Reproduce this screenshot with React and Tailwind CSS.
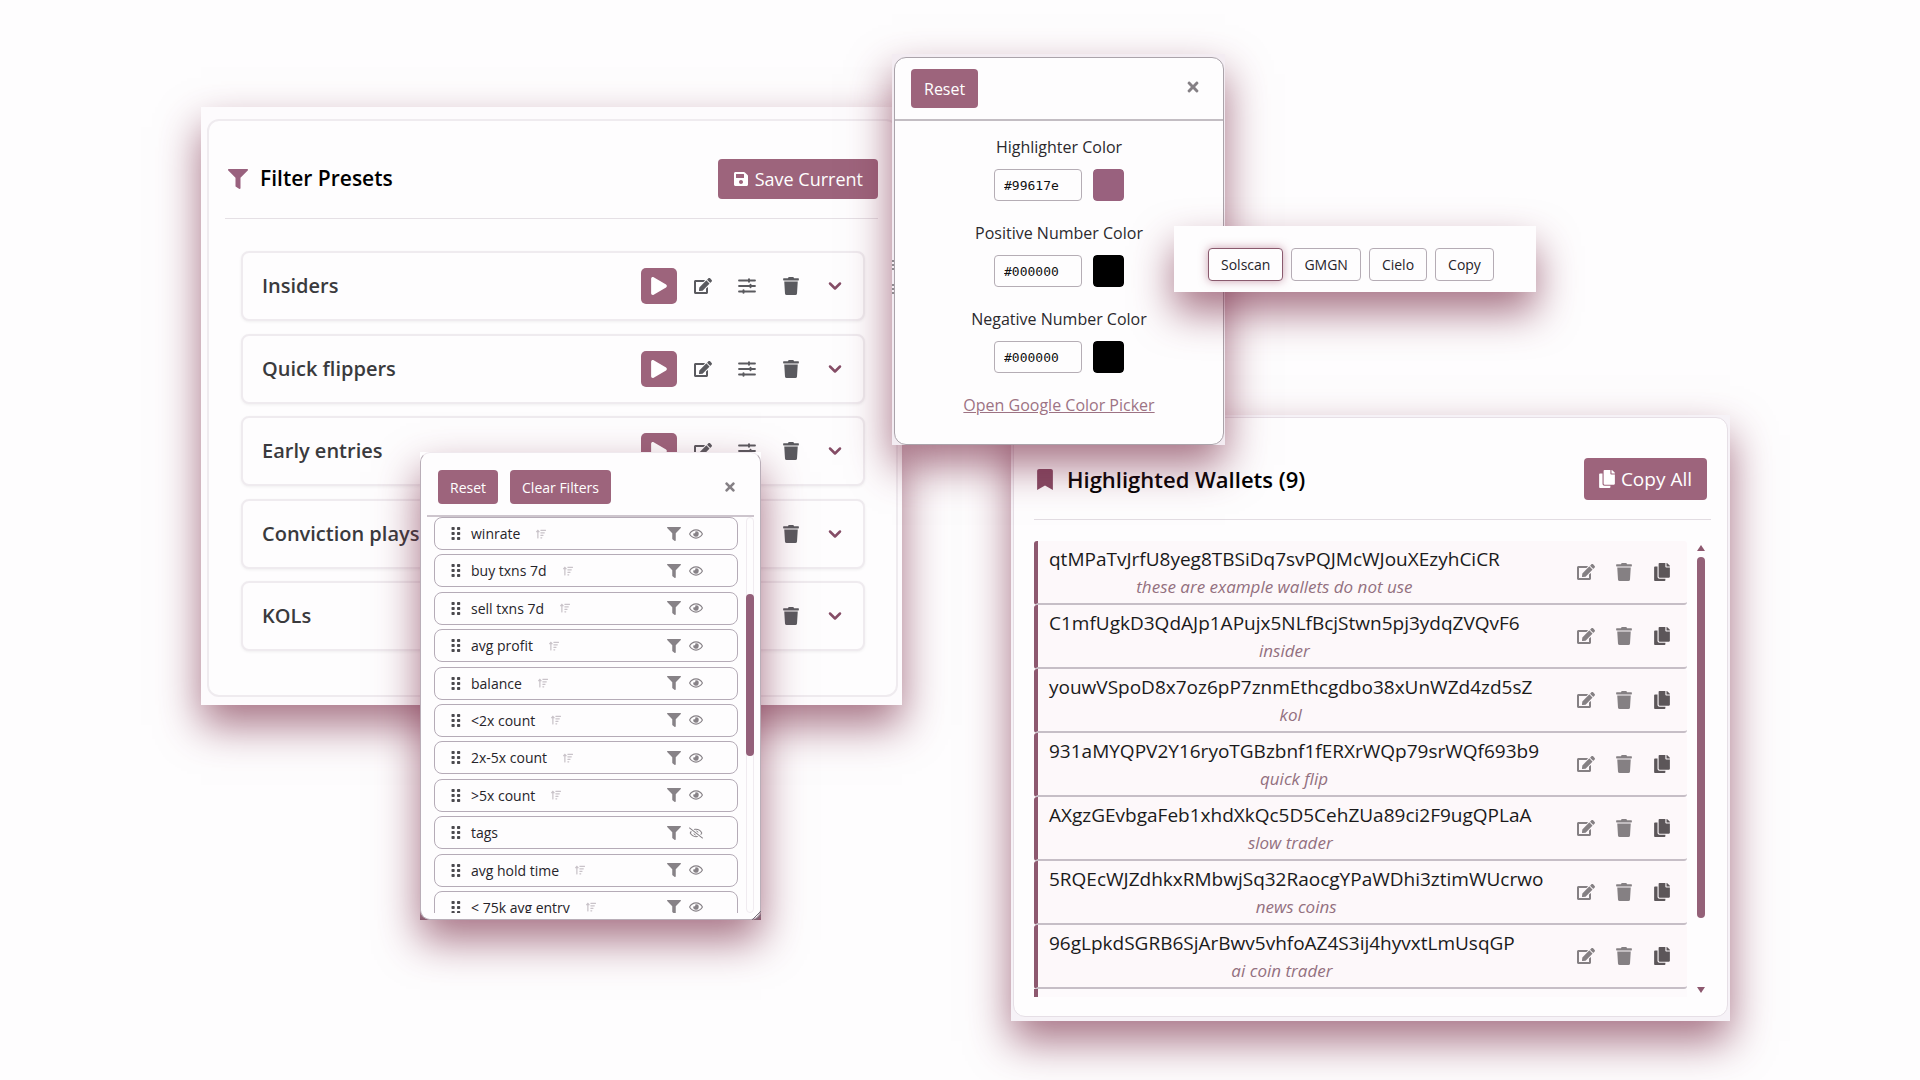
import { useState } from 'react';
import {
  FaBookmark,
  FaCopy,
  FaEdit,
  FaFilter,
  FaPlay,
  FaRegEye,
  FaRegEyeSlash,
  FaSave,
  FaSortAmountUp,
  FaTimes,
  FaTrash,
} from 'react-icons/fa';
import { ChevronDown } from 'lucide-react';
import clsx from 'clsx';

const SHADOW = 'shadow-[0_20px_40px_rgba(122,42,70,0.66)]';
const PRIMARY_BTN = 'rounded-[4px] bg-[#9d647c] text-white cursor-pointer';

const PRESETS = ['Insiders', 'Quick flippers', 'Early entries', 'Conviction plays', 'KOLs'];

const COLUMNS = [
  { name: 'winrate', sortable: true, visible: true },
  { name: 'buy txns 7d', sortable: true, visible: true },
  { name: 'sell txns 7d', sortable: true, visible: true },
  { name: 'avg profit', sortable: true, visible: true },
  { name: 'balance', sortable: true, visible: true },
  { name: '<2x count', sortable: true, visible: true },
  { name: '2x-5x count', sortable: true, visible: true },
  { name: '>5x count', sortable: true, visible: true },
  { name: 'tags', sortable: false, visible: false },
  { name: 'avg hold time', sortable: true, visible: true },
  { name: '< 75k avg entry', sortable: true, visible: true },
];

const WALLETS = [
  { address: 'qtMPaTvJrfU8yeg8TBSiDq7svPQJMcWJouXEzyhCiCR', note: 'these are example wallets do not use' },
  { address: 'C1mfUgkD3QdAJp1APujx5NLfBcjStwn5pj3ydqZVQvF6', note: 'insider' },
  { address: 'youwVSpoD8x7oz6pP7znmEthcgdbo38xUnWZd4zd5sZ', note: 'kol' },
  { address: '931aMYQPV2Y16ryoTGBzbnf1fERXrWQp79srWQf693b9', note: 'quick flip' },
  { address: 'AXgzGEvbgaFeb1xhdXkQc5D5CehZUa89ci2F9ugQPLaA', note: 'slow trader' },
  { address: '5RQEcWJZdhkxRMbwjSq32RaocgYPaWDhi3ztimWUcrwo', note: 'news coins' },
  { address: '96gLpkdSGRB6SjArBwv5vhfoAZ4S3ij4hyvxtLmUsqGP', note: 'ai coin trader' },
];

const COLORS = [
  { id: 'highlighter', label: 'Highlighter Color', value: '#99617e' },
  { id: 'positive', label: 'Positive Number Color', value: '#000000' },
  { id: 'negative', label: 'Negative Number Color', value: '#000000' },
];

function SlidersIcon({ className }) {
  return (
    <svg viewBox="0 0 18 16" className={className} fill="none" stroke="currentColor" strokeLinecap="round">
      <path d="M1 2.5h16M1 8h16M1 13.5h16" strokeWidth="1.8" />
      <path d="M11 1.2v2.6M12.5 6.7v2.6M5.5 12.2v2.6" strokeWidth="2" />
    </svg>
  );
}

function GripIcon({ className }) {
  return (
    <svg viewBox="0 0 10 13" className={className} fill="currentColor">
      {[0, 5, 10].map((y) => (
        <g key={y}>
          <rect x="0.5" y={y} width="3.2" height="3" rx="0.8" />
          <rect x="6" y={y} width="3.2" height="3" rx="0.8" />
        </g>
      ))}
    </svg>
  );
}

function IconButton({ label, className, children }) {
  return (
    <button type="button" aria-label={label} className={clsx('flex items-center justify-center cursor-pointer', className)}>
      {children}
    </button>
  );
}

function FilterPresets() {
  return (
    <section className={clsx('absolute left-[201px] top-[107px] w-[701px] h-[598px] bg-[#fdfbfd] pt-3 pb-2 pl-1.5 pr-1', SHADOW)}>
      <div className="h-full rounded-xl border-2 border-[#efebef] bg-[#fefdfe] pt-[38px] pl-4 pr-[18px]">
        <header className="flex h-[60px] items-start justify-between border-b border-[#e5e0e5]">
          <h2 className="flex h-10 items-center gap-3 pl-[3px] text-[21px] font-semibold text-black">
            <FaFilter className="size-5 text-[#99617e]" />
            Filter Presets
          </h2>
          <button type="button" className={clsx('flex h-10 items-center gap-1.5 px-[15px] text-[18px]', PRIMARY_BTN)}>
            <FaSave className="size-4" />
            Save Current
          </button>
        </header>
        <ul className="mt-8 ml-4 mr-[13px] flex h-[400px] flex-col justify-between">
          {PRESETS.map((name) => (
            <li
              key={name}
              className="flex h-[70px] items-center rounded-lg border-2 border-[#efebef] bg-[#fefdfe] pl-[19px] pr-[18px] shadow-[0_1px_3px_rgba(0,0,0,0.06)]"
            >
              <span className="flex-1 text-[20px] font-semibold text-[#3a3a3d]">{name}</span>
              <div className="flex items-center text-[#5a5a5f]">
                <IconButton label={`Apply ${name}`} className="mr-2 size-9 rounded-[5px] bg-[#9d647c] text-white">
                  <FaPlay className="size-[18px]" />
                </IconButton>
                <IconButton label={`Edit ${name}`} className="h-9 w-9">
                  <FaEdit className="size-[18px]" />
                </IconButton>
                <IconButton label={`Adjust ${name}`} className="ml-2 h-9 w-9">
                  <SlidersIcon className="h-4 w-[18px]" />
                </IconButton>
                <IconButton label={`Delete ${name}`} className="ml-2 h-9 w-9">
                  <FaTrash className="size-[18px]" />
                </IconButton>
                <IconButton label={`Expand ${name}`} className="ml-4 w-5 text-[#854d66]">
                  <ChevronDown className="size-5" strokeWidth={3} />
                </IconButton>
              </div>
            </li>
          ))}
        </ul>
      </div>
    </section>
  );
}

function WalletList() {
  return (
    <section className={clsx('absolute left-[1011px] top-[415px] w-[719px] h-[606px] bg-[#f6f2f7] pt-0.5 pb-1 px-0.5', SHADOW)}>
      <div className="h-full rounded-xl border border-[#e6dfe6] bg-[#fefdfe] pt-10 pl-5 pr-4">
        <header className="flex h-[62px] items-start justify-between border-b border-[#e2dce2] pr-1">
          <h2 className="flex h-[42px] items-center gap-3.5 pl-[3px] text-[22px] font-semibold text-black">
            <FaBookmark className="h-[21px] w-4 text-[#854963]" />
            Highlighted Wallets (9)
          </h2>
          <button type="button" className={clsx('flex h-[42px] items-center gap-1.5 px-[15px] text-[19px]', PRIMARY_BTN)}>
            <FaCopy className="h-[18px] w-4" />
            Copy All
          </button>
        </header>
        <div className="mt-[21px] flex justify-between pr-1.5">
          <ul className="h-[456px] w-[653px] overflow-hidden">
            {WALLETS.map(({ address, note }) => (
              <li
                key={address}
                className="flex h-16 items-center justify-between rounded-[3px] border-b-2 border-l-4 border-b-[#c6bec6] border-l-[#8d586f] bg-[#fdf8fa] pl-[11px] pr-4"
              >
                <div className="pt-0.5 text-center">
                  <p className="text-[19px] leading-7 text-[#1a1a1a]">{address}</p>
                  <p className="text-[17px] leading-7 text-[#93707f] italic">{note}</p>
                </div>
                <div className="flex shrink-0 items-center gap-5 text-[#858083]">
                  <IconButton label={`Edit ${note}`}>
                    <FaEdit className="size-[18px]" />
                  </IconButton>
                  <IconButton label={`Delete ${note}`}>
                    <FaTrash className="size-[18px]" />
                  </IconButton>
                  <IconButton label={`Copy ${note}`} className="text-[#5c5659]">
                    <FaCopy className="size-[18px]" />
                  </IconButton>
                </div>
              </li>
            ))}
            <li className="h-16 border-l-4 border-l-[#8d586f] bg-[#fdfafc]" />
          </ul>
          <div className="flex w-2 flex-col items-center pt-1 text-[#8d586f]">
            <svg viewBox="0 0 8 6" className="h-1.5 w-2" fill="currentColor">
              <path d="M4 0l4 6H0z" />
            </svg>
            <div className="mt-1.5 h-[361px] w-2 rounded-full bg-[#946178]" />
            <svg viewBox="0 0 8 6" className="mt-[69px] h-1.5 w-2" fill="currentColor">
              <path d="M4 6L0 0h8z" />
            </svg>
          </div>
        </div>
      </div>
    </section>
  );
}

function ColumnSettings() {
  return (
    <section
      className={clsx(
        'absolute left-[420px] top-[452px] w-[341px] h-[468px] bg-linear-to-b from-transparent from-90% to-[#8a5b6f]',
        SHADOW
      )}
    >
      <div className="h-full rounded-[10px] border border-[#b9aeb8] border-t-[#efe9ee] bg-[#fefdfe] px-1.5 pt-[17px] text-[14px]">
        <header className="flex h-[47px] items-start gap-3 border-b-2 border-[#cdc5cd] pl-[11px] pr-[17px]">
          <button type="button" className={clsx('h-[34px] px-3 font-medium', PRIMARY_BTN)}>
            Reset
          </button>
          <button type="button" className={clsx('h-[34px] px-3 font-medium', PRIMARY_BTN)}>
            Clear Filters
          </button>
          <IconButton label="Close columns" className="ml-auto h-[34px] text-[#858085]">
            <FaTimes className="size-3.5" />
          </IconButton>
        </header>
        <div className="flex h-[396px] justify-between overflow-hidden">
          <ul className="ml-[7px] flex h-[407px] w-[304px] flex-col justify-between">
            {COLUMNS.map(({ name, sortable, visible }) => (
              <li
                key={name}
                className="flex h-[33px] shrink-0 items-center rounded-lg border border-[#b5abb7] bg-[#fefdfe] pl-4 pr-[34px]"
              >
                <GripIcon className="mr-2.5 h-[13px] w-2.5 text-[#4a494e]" />
                <span className="text-[#26242a]">{name}</span>
                {sortable && <FaSortAmountUp className="ml-4 size-2.5 text-[#c9c3c9]" />}
                <div className="ml-auto flex items-center gap-2 text-[#878287]">
                  <IconButton label={`Filter ${name}`}>
                    <FaFilter className="size-3.5" />
                  </IconButton>
                  <IconButton label={`Toggle ${name}`}>
                    {visible ? <FaRegEye className="size-3.5" /> : <FaRegEyeSlash className="size-3.5" />}
                  </IconButton>
                </div>
              </li>
            ))}
          </ul>
          <div className="w-2 rounded-full border border-[#f0ebf0] pt-[76px]">
            <div className="-mx-px h-[162px] rounded-full bg-[#94607a]" />
          </div>
        </div>
      </div>
      <svg viewBox="0 0 10 10" className="absolute right-0 bottom-0 size-2.5" stroke="#77707a" fill="none">
        <path d="M1 10L10 1M5 10l5-5" />
      </svg>
    </section>
  );
}

function ColorSettings() {
  const [colors, setColors] = useState(COLORS);

  const update = (id, value) => {
    setColors(colors.map((c) => (c.id === id ? { ...c, value } : c)));
  };

  return (
    <section className={clsx('absolute left-[892px] top-[54px] w-[333px] h-[391px] bg-[#f3ecf2] pt-[3px] pl-0.5 pr-px', SHADOW)}>
      {/* resize grips on the left edge */}
      <span className="absolute left-0 top-[206px] h-2.5 border-l-2 border-dotted border-[#8f8a8f]" />
      <span className="absolute left-0 top-[230px] h-2.5 border-l-2 border-dotted border-[#8f8a8f]" />
      <div className="h-full rounded-xl border border-[#aaa3aa] bg-[#fefdfe]">
        <header className="flex h-[63px] items-start justify-between border-b-2 border-[#c3bdc3] pt-[11px] pl-4 pr-[22px]">
          <button type="button" className={clsx('h-[39px] px-[13px] text-[16px] font-medium', PRIMARY_BTN)}>
            Reset
          </button>
          <IconButton label="Close colors" className="h-9">
            <FaTimes className="size-4 text-[#858085]" />
          </IconButton>
        </header>
        <div className="flex flex-col items-center gap-[18px] pt-3 text-[16px] text-[#2b292d]">
          {colors.map(({ id, label, value }) => (
            <div key={id} className="flex flex-col items-center gap-2">
              <label htmlFor={id} className="leading-7">
                {label}
              </label>
              <div className="flex items-center gap-[11px]">
                <input
                  id={id}
                  type="text"
                  value={value}
                  onChange={(e) => update(id, e.target.value)}
                  className="h-8 w-[88px] rounded-[4px] border border-[#b5adb5] px-[9px] font-['DejaVu_Sans_Mono',monospace] text-[13px] text-[#111]"
                />
                <input
                  type="color"
                  aria-label={`${label} swatch`}
                  value={value}
                  onChange={(e) => update(id, e.target.value)}
                  className="h-8 w-[31px] cursor-pointer appearance-none overflow-hidden rounded-[4px] [&::-webkit-color-swatch]:rounded-[4px] [&::-webkit-color-swatch]:border-0 [&::-webkit-color-swatch-wrapper]:p-0"
                />
              </div>
            </div>
          ))}
          <a href="#color-picker" className="leading-7 text-[#9d7384] underline">
            Open Google Color Picker
          </a>
        </div>
      </div>
    </section>
  );
}

function ExplorerLinks() {
  return (
    <nav className={clsx('absolute left-[1174px] top-[226px] flex w-[362px] h-[66px] items-start gap-2 bg-[#fefdfe] pt-[22px] pl-[34px] text-[14px] text-[#26242a]', SHADOW)}>
      {['Solscan', 'GMGN', 'Cielo', 'Copy'].map((name, i) => (
        <button
          key={name}
          type="button"
          className={clsx(
            'h-[33px] rounded-[4px] border bg-[#fefdfe] px-3 cursor-pointer',
            i === 0 ? 'border-[#8a5a6e] shadow-[0_0_10px_rgba(153,70,100,0.5)]' : 'border-[#b5acb5]'
          )}
        >
          {name}
        </button>
      ))}
    </nav>
  );
}

export default function App() {
  return (
    <main className="relative min-h-screen overflow-hidden bg-[#fefdfe] font-['Open_Sans','Noto_Sans',sans-serif]">
      <FilterPresets />
      <WalletList />
      <ColumnSettings />
      <ColorSettings />
      <ExplorerLinks />
    </main>
  );
}
